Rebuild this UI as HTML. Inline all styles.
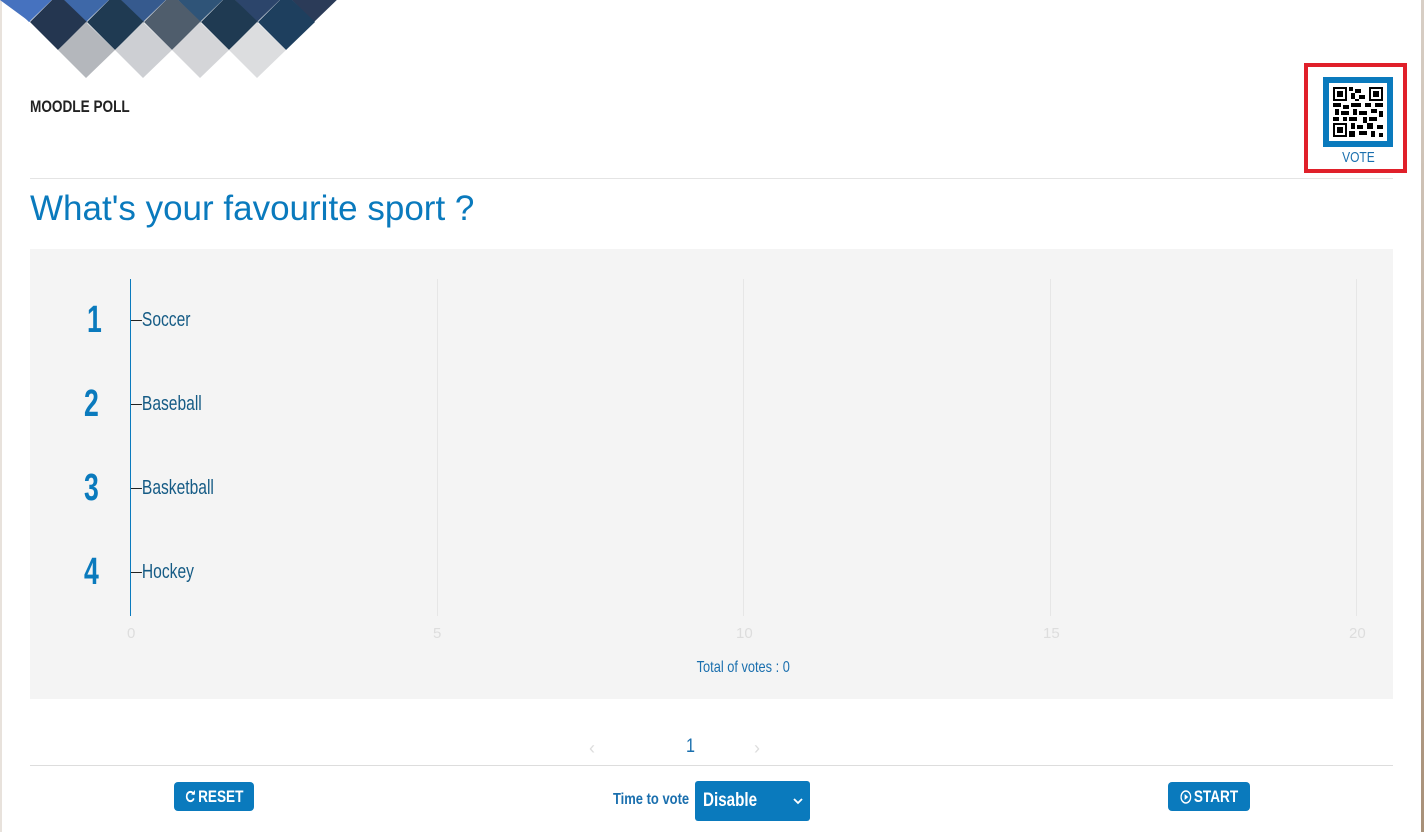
<!DOCTYPE html>
<html><head><meta charset="utf-8"><style>
*{margin:0;padding:0;box-sizing:border-box}
body{width:1424px;height:832px;overflow:hidden;background:#fff;position:relative;font-family:"Liberation Sans",sans-serif}
.abs{position:absolute}
.c{display:inline-block;transform:scaleX(0.78);transform-origin:0 50%;white-space:nowrap}
.cc{display:inline-block;transform:scaleX(0.8);transform-origin:50% 50%;white-space:nowrap}
</style></head><body>
<div class="abs" style="left:0;top:0;width:2px;height:832px;background:#e8e2dc"></div>
<div class="abs" style="right:0;top:0;width:3px;height:832px;background:linear-gradient(#d8cfc6,#a89078)"></div>
<svg class="abs" style="left:0;top:0" width="340" height="80">
<polygon points="0,0 30,0 30,22 0,0" fill="#4672bf"/>
<polygon points="29,-35 58,-6 29,22 0,-6" fill="#4672bf"/>
<polygon points="86,-35 115,-6 86,22 58,-6" fill="#3e68a8"/>
<polygon points="143,-35 172,-6 143,22 115,-6" fill="#365a8e"/>
<polygon points="200,-35 229,-6 200,22 172,-6" fill="#2f5478"/>
<polygon points="257,-35 286,-6 257,22 229,-6" fill="#2c456b"/>
<polygon points="314,-35 343,-6 314,22 286,-6" fill="#2b3b58"/>
<polygon points="58,-6 87,22 58,50 30,22" fill="#243650"/>
<polygon points="115,-6 144,22 115,50 87,22" fill="#1f3a52"/>
<polygon points="172,-6 201,22 172,50 144,22" fill="#4f5d6c"/>
<polygon points="229,-6 258,22 229,50 201,22" fill="#1f3a52"/>
<polygon points="286,-6 315,22 286,50 258,22" fill="#1e3f5e"/>
<polygon points="86,22 115,50 86,78 58,50" fill="#b4b7bc"/>
<polygon points="143,22 172,50 143,78 115,50" fill="#cdcfd3"/>
<polygon points="200,22 229,50 200,78 172,50" fill="#d4d5d8"/>
<polygon points="257,22 286,50 257,78 229,50" fill="#dcdddf"/>
</svg>
<div class="abs" style="left:30px;top:97px;font-size:17px;color:#222;font-weight:bold"><span class="c" style="transform:scaleX(0.8)">MOODLE POLL</span></div>
<div class="abs" style="left:1304px;top:63px;width:103px;height:110px;border:4px solid #e0202a"></div>
<div class="abs" style="left:1323px;top:77px;width:70px;height:70px;background:#0a7abd;padding:6px">
<svg width="58" height="58" viewBox="0 0 29 29" style="background:#fff;display:block">
<g fill="#000">
<path d="M2 2h7v7h-7zM3 3v5h5v-5zM4 4h3v3h-3z" fill-rule="evenodd"/>
<path d="M20 2h7v7h-7zM21 3v5h5v-5zM22 4h3v3h-3z" fill-rule="evenodd"/>
<path d="M2 20h7v7h-7zM3 21v5h5v-5zM4 22h3v3h-3z" fill-rule="evenodd"/>
<rect x="10" y="2" width="2" height="2"/><rect x="13" y="3" width="3" height="2"/><rect x="11" y="5" width="2" height="3"/><rect x="15" y="6" width="3" height="2"/><rect x="13" y="8" width="2" height="1"/>
<rect x="2" y="10" width="4" height="2"/><rect x="7" y="11" width="3" height="2"/><rect x="11" y="10" width="5" height="2"/><rect x="18" y="10" width="3" height="2"/><rect x="23" y="10" width="4" height="2"/>
<rect x="3" y="13" width="2" height="3"/><rect x="6" y="14" width="4" height="2"/><rect x="12" y="13" width="2" height="3"/><rect x="15" y="14" width="4" height="2"/><rect x="21" y="13" width="3" height="2"/><rect x="25" y="14" width="2" height="3"/>
<rect x="2" y="17" width="3" height="2"/><rect x="7" y="17" width="2" height="2"/><rect x="10" y="17" width="4" height="2"/><rect x="17" y="17" width="2" height="3"/><rect x="20" y="17" width="4" height="2"/>
<rect x="11" y="20" width="2" height="3"/><rect x="14" y="21" width="3" height="2"/><rect x="19" y="20" width="3" height="3"/><rect x="24" y="21" width="3" height="2"/>
<rect x="10" y="24" width="3" height="3"/><rect x="15" y="24" width="4" height="2"/><rect x="21" y="24" width="2" height="3"/><rect x="25" y="25" width="2" height="2"/>
</g></svg></div>
<div class="abs" style="left:1323px;top:149px;width:70px;text-align:center;font-size:15px;color:#1a6fae"><span class="cc">VOTE</span></div>
<div class="abs" style="left:30px;top:178px;width:1363px;height:1px;background:#e4e4e4"></div>
<div class="abs" style="left:30px;top:189px;font-size:35px;color:#0a7abd">What's your favourite sport ?</div>
<div class="abs" style="left:30px;top:249px;width:1363px;height:450px;background:#f4f4f4"></div>
<div class="abs" style="left:437px;top:279px;width:1px;height:337px;background:#e6e6e6"></div>
<div class="abs" style="left:743px;top:279px;width:1px;height:337px;background:#e6e6e6"></div>
<div class="abs" style="left:1050px;top:279px;width:1px;height:337px;background:#e6e6e6"></div>
<div class="abs" style="left:1356px;top:279px;width:1px;height:337px;background:#e6e6e6"></div>
<div class="abs" style="left:130px;top:279px;width:1px;height:337px;background:#0a7abd"></div>
<div class="abs" style="left:0;top:625px;width:1424px;font-size:15px;color:#ddd">
<span class="abs" style="left:127px">0</span><span class="abs" style="left:433px">5</span><span class="abs" style="left:736px">10</span><span class="abs" style="left:1043px">15</span><span class="abs" style="left:1349px">20</span></div>
<div class="abs" style="left:0;top:659px;width:1486px;text-align:center;font-size:16px;color:#1a6fae"><span class="cc">Total of votes : 0</span></div>
<div class="abs" style="left:70px;top:297px;font-weight:bold;font-size:38px;color:#0a7abd;line-height:46px">
<div style="position:absolute;top:0;left:17px"><span class="c" style="transform:scaleX(0.7)">1</span></div><div style="position:absolute;top:84px;left:14px"><span class="c" style="transform:scaleX(0.7)">2</span></div><div style="position:absolute;top:168px;left:14px"><span class="c" style="transform:scaleX(0.7)">3</span></div><div style="position:absolute;top:252px;left:14px"><span class="c" style="transform:scaleX(0.7)">4</span></div></div>
<div class="abs" style="left:131px;top:308px;font-size:20px;color:#155b85;line-height:24px">
<div style="position:absolute;top:0"><span class="c"><span style="display:inline-block;width:14px;height:1px;background:#222;vertical-align:middle"></span>Soccer</span></div>
<div style="position:absolute;top:84px"><span class="c"><span style="display:inline-block;width:14px;height:1px;background:#222;vertical-align:middle"></span>Baseball</span></div>
<div style="position:absolute;top:168px"><span class="c"><span style="display:inline-block;width:14px;height:1px;background:#222;vertical-align:middle"></span>Basketball</span></div>
<div style="position:absolute;top:252px"><span class="c"><span style="display:inline-block;width:14px;height:1px;background:#222;vertical-align:middle"></span>Hockey</span></div></div>
<div class="abs" style="left:589px;top:738px;font-size:18px;color:#ddd">‹</div>
<div class="abs" style="left:686px;top:736px;font-size:19px;color:#1a6fae"><span class="c" style="transform:scaleX(0.85)">1</span></div>
<div class="abs" style="left:754px;top:738px;font-size:18px;color:#ddd">›</div>
<div class="abs" style="left:30px;top:765px;width:1363px;height:1px;background:#ddd"></div>
<div class="abs" style="left:174px;top:782px;width:80px;height:29px;background:#0a7abd;border-radius:4px;color:#fff;font-weight:bold;font-size:17px;line-height:29px;text-align:center">
<span class="cc"><svg width="13" height="13" viewBox="0 0 14 14" style="vertical-align:-1px;margin-right:3px"><path d="M11.5 5A5 5 0 1 0 11.5 9" fill="none" stroke="#fff" stroke-width="2.2"/><path d="M8 5h5v-5z" fill="#fff"/></svg>RESET</span></div>
<div class="abs" style="left:613px;top:791px;font-size:16px;color:#1a6fae;font-weight:bold"><span class="c" style="transform:scaleX(0.81)">Time to vote</span></div>
<div class="abs" style="left:695px;top:781px;width:115px;height:40px;background:#0a7abd;border-radius:3px;color:#fff;font-weight:bold;font-size:19px;line-height:40px;padding-left:8px"><span class="c" style="transform:scaleX(0.8)">Disable</span><svg class="abs" style="left:98px;top:16px" width="10" height="8" viewBox="0 0 10 8"><path d="M1 2l4 4 4-4" fill="none" stroke="#fff" stroke-width="1.8"/></svg></div>
<div class="abs" style="left:1168px;top:782px;width:82px;height:29px;background:#0a7abd;border-radius:4px;color:#fff;font-weight:bold;font-size:17px;line-height:29px;text-align:center">
<span class="cc"><svg width="14" height="14" viewBox="0 0 14 14" style="vertical-align:-2px;margin-right:3px"><circle cx="7" cy="7" r="6" fill="none" stroke="#fff" stroke-width="1.6"/><path d="M5.5 4v6l4.5-3z" fill="#fff"/></svg>START</span></div>
</body></html>
